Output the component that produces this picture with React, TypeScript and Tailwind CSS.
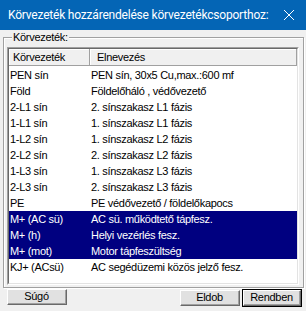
import React from "react";

const rows: [string, string][] = [
  ["PEN sín", "PEN sín, 30x5 Cu,max.:600 mf"],
  ["Föld", "Földelőháló , védővezető"],
  ["2-L1 sín", "2. sínszakasz L1 fázis"],
  ["1-L1 sín", "1. sínszakasz L1 fázis"],
  ["1-L2 sín", "1. sínszakasz L2 fázis"],
  ["2-L2 sín", "2. sínszakasz L2 fázis"],
  ["1-L3 sín", "1. sínszakasz L3 fázis"],
  ["2-L3 sín", "2. sínszakasz L3 fázis"],
  ["PE", "PE védővezető / földelőkapocs"],
  ["M+ (AC sü)", "AC sü. működtető tápfesz."],
  ["M+ (h)", "Helyi vezérlés fesz."],
  ["M+ (mot)", "Motor tápfeszültség"],
  ["KJ+ (ACsü)", "AC segédüzemi közös jelző fesz."],
];

const selected = new Set([9, 10, 11]);

function Btn({ label, def }: { label: string; def?: boolean }) {
  return (
    <div className={def ? "border border-black" : ""}>
      <div className="border-t border-l border-white border-r border-b border-r-[#696969] border-b-[#696969] bg-[#E1E1E1]">
        <div className="flex items-center justify-center h-[14px] border-r border-b border-[#A0A0A0] border-t-0 border-l-0">
          {label}
        </div>
      </div>
    </div>
  );
}

export default function App() {
  return (
    <div
      className="w-[306px] h-[311px] bg-[#F0F0F0] overflow-hidden text-black text-[11px] leading-none tracking-[-0.3px]"
      style={{ fontFamily: '"Liberation Sans", Arial, sans-serif' }}
    >
      <div
        className="h-[30px] bg-[#0465B5] flex items-center pl-[8px] pr-[10px] text-white text-[12px] tracking-[-0.2px] whitespace-nowrap"
        style={{ fontFamily: 'Roboto, "Noto Sans", sans-serif' }}
      >
        <span className="flex-1 overflow-hidden">Körvezeték hozzárendelése körvezetékcsoporthoz:</span>
        <svg width="12" height="12" viewBox="0 0 12 12" className="mr-[1px] shrink-0">
          <path d="M1 1L11 11M11 1L1 11" stroke="white" strokeWidth="1" />
        </svg>
      </div>
      <div className="pt-[7px] pl-[3px] pr-[2px]">
        <div className="relative border border-[#A0A0A0] h-[251px] shadow-[inset_1px_1px_0_#fff,1px_1px_0_#fff]">
          <div className="absolute left-[8px] top-[-7px] bg-[#F0F0F0] px-[1px] leading-[13px]">Körvezeték:</div>
          <div className="pt-[9px] pl-[3px] pr-[4px]">
            <div className="border border-[#A0A0A0] border-r-white border-b-white h-[238px]">
              <div className="border border-[#696969] border-r-[#E3E3E3] border-b-[#E3E3E3] h-full bg-white">
                <div className="flex h-[17px] bg-[#F0F0F0]">
                  <div className="w-[81px] border-r border-b border-[#A0A0A0] border-t-0 border-l-0 shadow-[inset_1px_1px_0_#fff] pl-[4px] flex items-center">
                    Körvezeték
                  </div>
                  <div className="flex-1 border-r border-b border-[#A0A0A0] shadow-[inset_1px_1px_0_#fff] pl-[7px] flex items-center">
                    Elnevezés
                  </div>
                </div>
                <div className="pt-[1px]">
                  {rows.map(([a, b], i) => (
                    <div
                      key={i}
                      className={
                        "flex h-[16px] items-center " +
                        (selected.has(i) ? "bg-[#000080] text-white" : "")
                      }
                    >
                      <div className="w-[81px] pl-[1px]">{a}</div>
                      <div className="flex-1 pl-[1px]">{b}</div>
                    </div>
                  ))}
                </div>
              </div>
            </div>
          </div>
        </div>
      </div>
      <div className="flex pt-[1px] pl-[7px] pr-[4px]">
        <div className="w-[60px]">
          <Btn label="Súgó" />
        </div>
        <div className="flex-1" />
        <div className="w-[60px] mt-[1px]">
          <Btn label="Eldob" />
        </div>
        <div className="w-[60px] ml-[2px]">
          <Btn label="Rendben" def />
        </div>
      </div>
    </div>
  );
}
